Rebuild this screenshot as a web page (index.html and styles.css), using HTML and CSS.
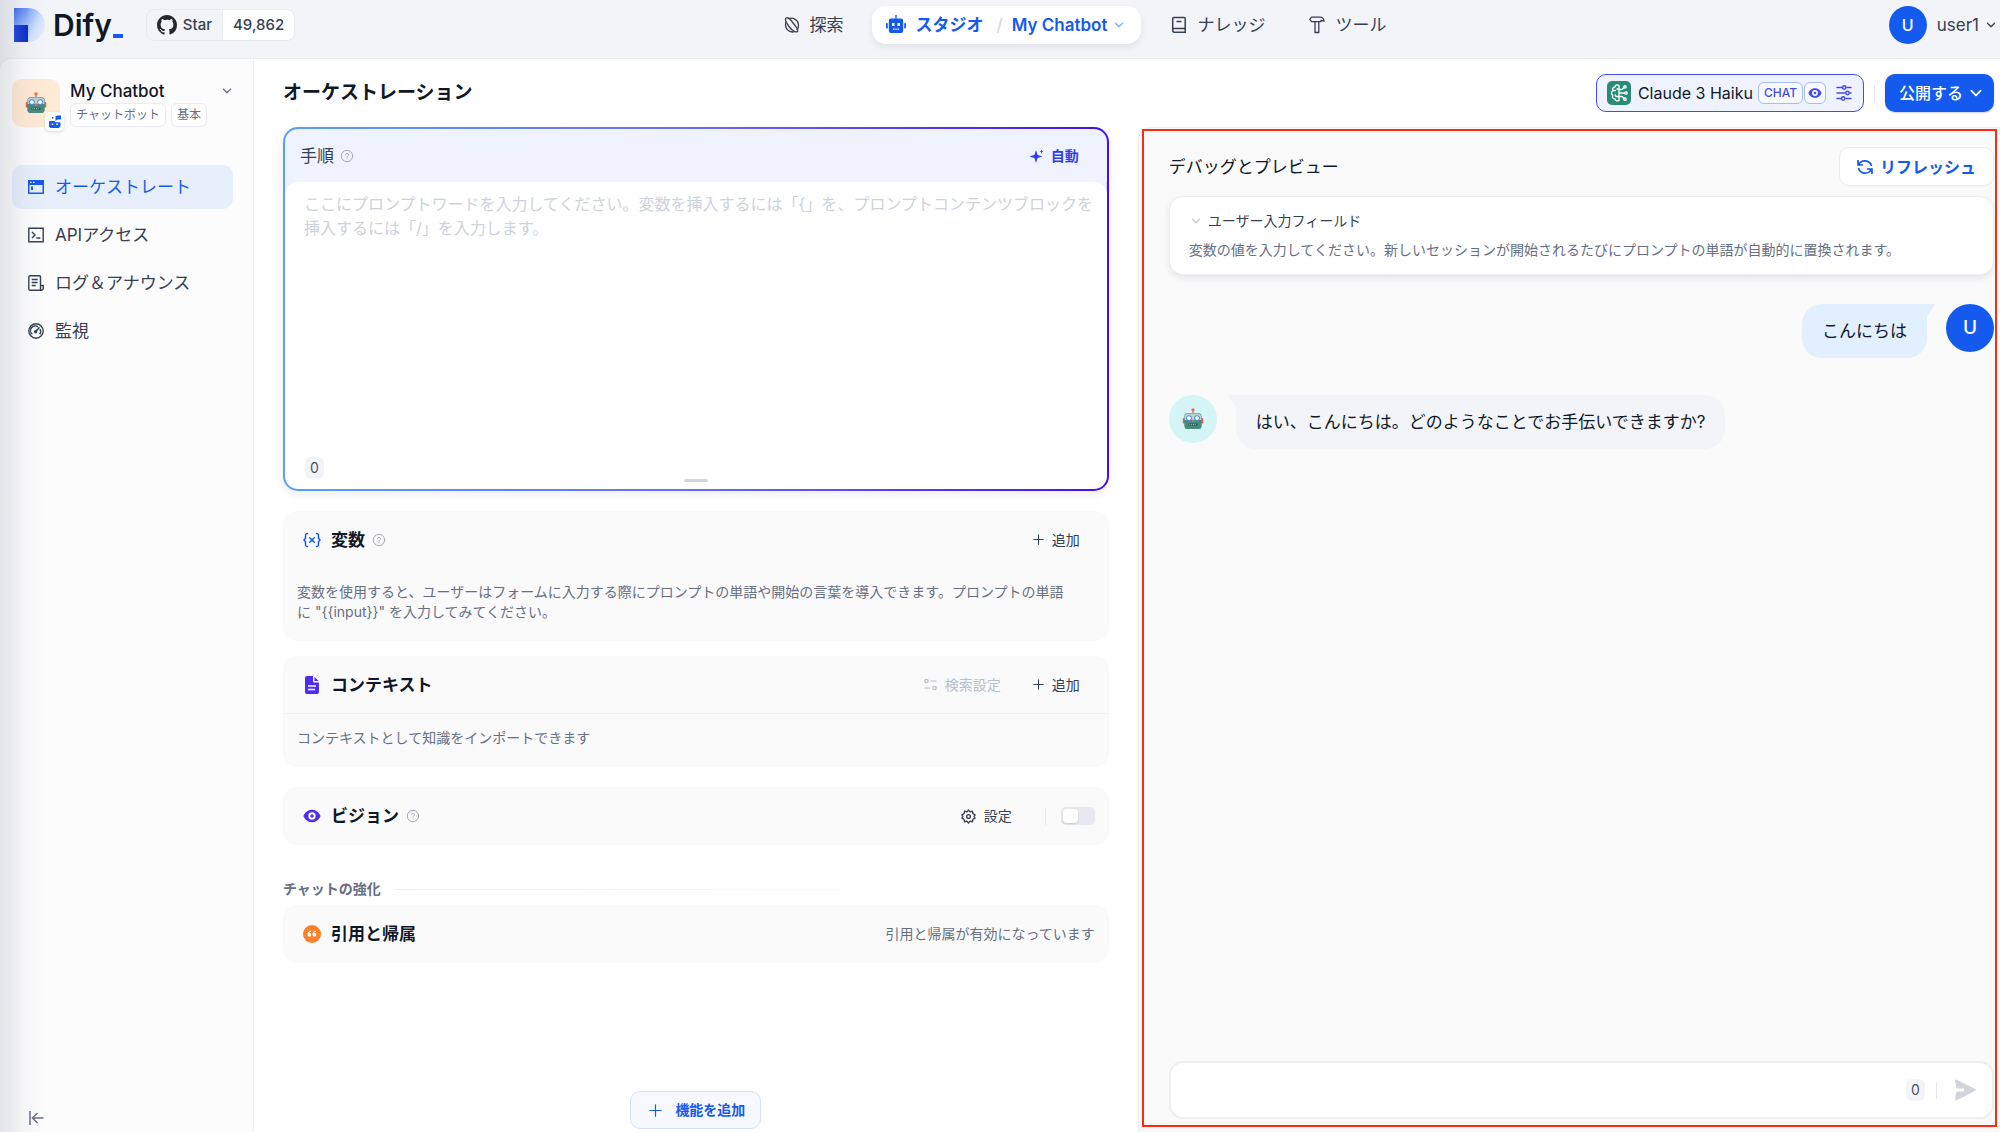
FILE: index.html
```html
<!DOCTYPE html>
<html lang="ja">
<head>
<meta charset="utf-8">
<meta name="viewport" content="width=device-width, initial-scale=1">
<title>My Chatbot - Dify</title>
<link rel="stylesheet" href="styles.css">
</head>
<body>
<svg class="defs" aria-hidden="true">
  <symbol id="chevron" viewBox="0 0 12 12"><path d="M2.5 4.2 6 7.8l3.5-3.6" fill="none" stroke="currentColor" stroke-width="1.3" stroke-linecap="round" stroke-linejoin="round"/></symbol>
  <symbol id="help" viewBox="0 0 14 14"><g fill="none" stroke="currentColor" stroke-linecap="round"><circle cx="7" cy="7" r="5.7"/><path d="M5.5 5.7a1.5 1.5 0 1 1 2.2 1.4c-.5.3-.7.5-.7 1"/><path d="M7 9.9v.1"/></g></symbol>
  <symbol id="plus" viewBox="0 0 12 12"><path d="M6 .8v10.400M.8 6h10.400" fill="none" stroke="currentColor" stroke-width="1.1" stroke-linecap="round"/></symbol>
  <symbol id="eye" viewBox="0 0 18 18"><path fill-rule="evenodd" d="M9 2.800C4.500 2.800 1.600 6 .5 9c1.100 3 4 6.200 8.500 6.200S16.400 12 17.500 9C16.400 6 13.500 2.800 9 2.800ZM9 5.300a3.700 3.700 0 1 1 0 7.400 3.700 3.700 0 0 1 0-7.400Zm0 2a1.700 1.700 0 1 0 0 3.400 1.700 1.700 0 0 0 0-3.400Z" fill="currentColor"/></symbol>
  <symbol id="robot" viewBox="0 0 24 24">
    <path d="M12 3v4" stroke="#8b98a0" stroke-width="1.500"/><circle cx="12" cy="2" r="1.800" fill="#f06a4c"/>
    <rect x=".8" y="11" width="3" height="6" rx="1" fill="#e0654a"/><rect x="20.200" y="11" width="3" height="6" rx="1" fill="#e0654a"/>
    <path d="M2.500 10q0-4.500 4.500-4.500h10q4.500 0 4.500 4.500v9q0 4-4 4H6.500q-4 0-4-4Z" fill="#468a80"/>
    <path d="M3 10q0-4 4-4h10q4 0 4 4v3H3Z" fill="#c3d0d0"/>
    <circle cx="7.600" cy="11" r="3.100" fill="#4b8fe2"/><circle cx="16.400" cy="11" r="3.100" fill="#4b8fe2"/>
    <circle cx="7.600" cy="11" r="2.100" fill="#fff"/><circle cx="16.400" cy="11" r="2.100" fill="#fff"/>
    <path d="m12 12 1.800 3h-3.600Z" fill="#f06a4c"/><rect x="7" y="17" width="10" height="2.400" rx=".6" fill="#245e58"/>
    <path d="M8 18.200h8" stroke="#c9dcd8" stroke-dasharray="1 1"/>
  </symbol>
</svg>

<header class="topbar">
  <div class="brand">
    <a class="logo" href="#" aria-label="Dify">
      <svg width="31" height="34" viewBox="0 0 31 34" aria-hidden="true">
        <defs>
          <linearGradient id="lg1" x1="0" y1="0" x2="1" y2="1"><stop offset="0" stop-color="#3f70ee"/><stop offset="1" stop-color="#a9c5fa"/></linearGradient>
          <linearGradient id="lg2" x1="0" y1="0" x2="1" y2="1"><stop offset="0" stop-color="#7fa6f6"/><stop offset=".5" stop-color="#cfe0fd"/><stop offset="1" stop-color="#eef4ff"/></linearGradient>
          <linearGradient id="lg3" x1="0" y1="0" x2="1" y2="0"><stop offset="0" stop-color="#2448dc"/><stop offset="1" stop-color="#0d2cc8"/></linearGradient>
        </defs>
        <path d="M14 0a17 17 0 0 1 0 34Z" fill="url(#lg2)"/><path d="M0 0h14v17H0Z" fill="url(#lg1)"/><path d="M0 17h14v17H0Z" fill="url(#lg3)"/>
      </svg>
      <span class="logo-name">Dify</span><span class="logo-bar"></span>
    </a>
    <a class="stars" href="#">
      <span class="stars-label">
        <svg width="20" height="20" viewBox="0 0 16 16" aria-hidden="true"><path fill="#24292f" d="M8 0C3.580 0 0 3.580 0 8c0 3.540 2.290 6.530 5.470 7.590.4.070.55-.17.55-.38 0-.19-.01-.82-.01-1.490-2.010.37-2.530-.49-2.690-.94-.09-.23-.48-.94-.82-1.130-.28-.15-.68-.52-.01-.53.63-.01 1.080.58 1.230.82.72 1.210 1.870.87 2.330.66.070-.52.28-.87.51-1.070-1.780-.2-3.640-.89-3.640-3.950 0-.87.31-1.590.82-2.150-.08-.2-.36-1.020.08-2.120 0 0 .67-.21 2.200.82A7.600 7.600 0 0 1 8 3.860c.68 0 1.360.09 2 .27 1.530-1.040 2.200-.82 2.200-.82.44 1.100.16 1.920.08 2.120.51.56.82 1.270.82 2.150 0 3.070-1.870 3.750-3.650 3.950.29.25.54.73.54 1.480 0 1.070-.01 1.930-.01 2.200 0 .21.15.46.55.38A8.010 8.010 0 0 0 16 8c0-4.420-3.580-8-8-8Z"/></svg>
        Star</span>
      <span class="stars-count">49,862</span>
    </a>
  </div>
  <nav class="mainnav">
    <a href="#"><svg width="16" height="18" viewBox="0 0 16 18" fill="none" stroke="currentColor" stroke-width="1.300" aria-hidden="true"><path d="M4.500 2.800C9 .8 14.500 4 14.500 9.500c0 2-.6 3.600-1.700 4.800M10.500 15.700C6 17 1.500 13.500 1.500 8.800c0-1.300.2-2.300.7-3.300"/><path d="M13.500 15.500c-1.800 1.500-5.500-1-8.500-5S.5 3 2.200 2s4 1 6.500 4.500 6.500 7.300 4.800 9Z"/></svg>探索</a>
    <div class="pill">
      <a href="#"><svg width="20" height="20" viewBox="0 0 20 20" fill="currentColor" aria-hidden="true"><path fill-rule="evenodd" d="M9.300 0h1.400v3.500H15q2.200 0 2.200 2.200v10.100q0 2.200-2.200 2.200H5q-2.200 0-2.200-2.200V5.700q0-2.200 2.200-2.200h4.300ZM6 8v3h2.500V8Zm5.500 0v3H14V8ZM7 13.500v1.300h1.500v-1.300Zm2.300 0v1.300h1.500v-1.300Zm2.300 0v1.300h1.500v-1.300Z"/><rect x="0" y="8" width="1.800" height="5.500" rx=".8"/><rect x="18.200" y="8" width="1.800" height="5.500" rx=".8"/></svg>スタジオ</a>
      <span class="slash">/</span>
      <button type="button">My Chatbot<svg class="pale" width="12" height="12" aria-hidden="true"><use href="#chevron"/></svg></button>
    </div>
    <a href="#"><svg width="16" height="18" viewBox="0 0 16 18" fill="none" stroke="currentColor" stroke-width="1.500" aria-hidden="true"><path d="M14.200 12.500H3.200a1.500 1.500 0 0 0-1.500 1.700V2.500q0-1 1-1h10.500q1 0 1 1v13.700H3.200a1.700 1.700 0 0 1-1.500-2M5.500 5.500h5"/></svg>ナレッジ</a>
    <a href="#"><svg width="16" height="18" viewBox="0 0 16 18" fill="none" stroke="currentColor" stroke-width="1.300" stroke-linejoin="round" aria-hidden="true"><path d="M2.500 1.200h8.500q3.500 0 4 4l-3-.9v1.300H9.800V16.500H6V5.600H2.500L.8 3.400Z M6 5.600h3.800"/></svg>ツール</a>
  </nav>
  <button class="user" type="button"><span class="avatar avatar-sm">U</span>user1<svg width="12" height="12" aria-hidden="true"><use href="#chevron"/></svg></button>
</header>

<div class="shell">
  <aside class="sidebar">
    <div class="app">
      <div class="app-icon"><svg width="22" height="22" aria-hidden="true"><use href="#robot"/></svg>
        <span class="app-badge"><svg width="14" height="14" viewBox="0 0 14 14" fill="currentColor" aria-hidden="true"><path d="M7.500 1.500 9 .5h4v4H9.500L7.500 6ZM4 2h1.500v1.500H4ZM1.500 6h5l1 1.200H12l.5.5V11l-1.500 2H2.500L1 11.500V7Z"/><path d="M4.500 8.500V10M9 8.500V10" stroke="#fff" stroke-width="1.500"/></svg></span>
      </div>
      <div class="app-info">
        <button class="app-name" type="button">My Chatbot<svg width="12" height="12" aria-hidden="true"><use href="#chevron"/></svg></button>
        <div class="tags"><span>チャットボット</span><span>基本</span></div>
      </div>
    </div>
    <nav class="sidenav">
      <a class="active" href="#"><svg width="16" height="16" viewBox="0 0 16 16" aria-hidden="true"><path fill="currentColor" fill-rule="evenodd" d="M0 1h16v14H0ZM1.500 6v7.500h13V6ZM2 2.700v1.200h1.500V2.700Zm3 0v1.200h1.500V2.700ZM3 7.500h2V11H3Z"/></svg>オーケストレート</a>
      <a href="#"><svg width="16" height="16" viewBox="0 0 16 16" fill="none" stroke="currentColor" stroke-width="1.400" aria-hidden="true"><path d="M.8 1.300h14.400v13.400H.8ZM4 5l3 3-3 3M8.300 11h4"/></svg>APIアクセス</a>
      <a href="#"><svg width="16" height="16" viewBox="0 0 16 16" fill="none" stroke="currentColor" stroke-width="1.400" aria-hidden="true"><path d="M12.500 10.500V2q0-1.200-1.200-1.200H2Q.8.800.8 2v12q0 1.200 1.200 1.200h11.500q1.700 0 1.700-1.700v-3h-2.700v3q0 1.500 1.200 1.500M3.700 4.500h6M3.700 7.500h6M3.700 10.500h4"/></svg>ログ＆アナウンス</a>
      <a href="#"><svg width="16" height="16" viewBox="0 0 16 16" fill="none" stroke="currentColor" stroke-width="1.400" aria-hidden="true"><circle cx="8" cy="8" r="7.200"/><path d="M4.300 11.200A4.600 4.600 0 0 1 10 3.900M12 6a4.600 4.600 0 0 1-.4 5.200M7.500 8.700l4-4.400"/><circle cx="7.700" cy="8.700" r="1"/></svg>監視</a>
    </nav>
    <button class="collapse" type="button" aria-label="サイドバーを閉じる"><svg width="15" height="14" viewBox="0 0 15 14" fill="none" stroke="currentColor" stroke-width="1.500" aria-hidden="true"><path d="M1 0v14M14.500 7H4M8.500 2 3.500 7l5 5"/></svg></button>
  </aside>

  <main class="main">
    <div class="titlebar">
      <h1>オーケストレーション</h1>
      <div class="actions">
        <button class="model" type="button">
          <svg width="24" height="24" viewBox="0 0 24 24" aria-hidden="true"><rect width="24" height="24" rx="5" fill="#2a8c78"/><g fill="none" stroke="#fff" stroke-width="1.300" stroke-linejoin="round"><path d="M12 4.500c-2-1.200-4-.2-4 1.500C6 6 5 7.800 6 9.500c-2 1-2 3.500-.2 4.700C5 16 6 18 8 18c.3 2 2.600 2.500 4 1.200ZM12 8H9.500M12 15.500H9l-1-2M6 9.500h3M12 12h6M12 8.500h3l2-2M12 15.500h3l2 2"/><circle cx="18" cy="5.800" r="1.200"/><circle cx="19" cy="12" r="1.200"/><circle cx="18" cy="18.200" r="1.200"/></g></svg>
          <span class="model-name">Claude 3 Haiku</span>
          <span class="chips"><span class="chip">CHAT</span><span class="chip"><svg width="14" height="14" aria-hidden="true"><use href="#eye"/></svg></span></span>
          <svg width="16" height="16" viewBox="0 0 16 16" fill="none" stroke="currentColor" stroke-width="1.500" stroke-linecap="round" aria-hidden="true"><path d="M1 2.500h5M11 2.500h4M1 8h8M14 8h1M1 13.500h4M10 13.500h5"/><circle cx="8.200" cy="2.500" r="1.700"/><circle cx="11.500" cy="8" r="1.700"/><circle cx="7.200" cy="13.500" r="1.700"/></svg>
        </button>
        <span class="rule"></span>
        <button class="publish" type="button">公開する<svg width="16" height="16" aria-hidden="true"><use href="#chevron"/></svg></button>
      </div>
    </div>

    <div class="columns">
      <div class="config">
        <section class="prompt">
          <div class="prompt-head">
            <label for="prompt">手順</label><svg class="help" width="14" height="14" aria-hidden="true"><use href="#help"/></svg>
            <button class="auto" type="button"><svg width="14" height="14" viewBox="0 0 14 14" fill="currentColor" aria-hidden="true"><path d="M6 1 7.600 5.900l4.900 1.600-4.900 1.600L6 14 4.400 9.100-.5 7.500l4.900-1.600Z"/><path d="m11.500.5.6 1.400 1.400.6-1.400.6-.6 1.400-.6-1.400-1.400-.6 1.400-.6Z"/></svg>自動</button>
          </div>
          <div class="prompt-body">
            <textarea id="prompt" placeholder="ここにプロンプトワードを入力してください。変数を挿入するには「{」を、プロンプトコンテンツブロックを挿入するには「/」を入力します。"></textarea>
            <div class="prompt-foot"><span class="count">0</span><span class="grip"></span></div>
          </div>
        </section>

        <section class="card gap-md">
          <div class="card-head">
            <svg class="blue" width="18" height="18" viewBox="0 0 18 18" fill="none" stroke="currentColor" stroke-width="1.500" stroke-linecap="round" aria-hidden="true"><path d="M4.500 2.500c-2 0-2 .8-2 2.500v2.200L1 9l1.500 1.800V13c0 1.700 0 2.500 2 2.500M13.500 2.500c2 0 2 .8 2 2.500v2.200L17 9l-1.500 1.800V13c0 1.700 0 2.500-2 2.500M6.700 6.700l4.600 4.600M11.300 6.700l-4.600 4.600"/></svg>
            <h2>変数</h2><svg class="help" width="14" height="14" aria-hidden="true"><use href="#help"/></svg>
            <div class="tools"><button class="tool" type="button"><svg width="11" height="11" aria-hidden="true"><use href="#plus"/></svg>追加</button></div>
          </div>
          <p class="card-text">変数を使用すると、ユーザーはフォームに入力する際にプロンプトの単語や開始の言葉を導入できます。プロンプトの単語<br>に "{{input}}" を入力してみてください。</p>
        </section>

        <section class="card gap-sm">
          <div class="card-head">
            <svg class="violet" width="18" height="18" viewBox="0 0 18 18" aria-hidden="true"><path fill="currentColor" d="M4 0h6v5q0 1.500 1.500 1.500H16V16q0 2-2 2H4q-2 0-2-2V2q0-2 2-2Zm7.500.8L15.500 5h-4Z"/><path d="M5 10h8M5 13.500h7" stroke="#fafafb" stroke-width="1.300"/></svg>
            <h2>コンテキスト</h2>
            <div class="tools">
              <button class="tool" type="button" disabled><svg width="13" height="13" viewBox="0 0 13 13" fill="none" stroke="currentColor" stroke-width="1.200" stroke-linecap="round" aria-hidden="true"><circle cx="2.500" cy="3" r="1.700"/><path d="M7 3h5M1 10h5"/><circle cx="10.500" cy="10" r="1.700"/></svg>検索設定</button>
              <button class="tool" type="button"><svg width="11" height="11" aria-hidden="true"><use href="#plus"/></svg>追加</button>
            </div>
          </div>
          <p class="card-text ruled">コンテキストとして知識をインポートできます</p>
        </section>

        <section class="card gap-md">
          <div class="card-head tight">
            <svg class="violet" width="18" height="18" aria-hidden="true"><use href="#eye"/></svg>
            <h2>ビジョン</h2><svg class="help" width="14" height="14" aria-hidden="true"><use href="#help"/></svg>
            <div class="tools">
              <button class="tool" type="button"><svg width="15" height="15" viewBox="0 0 24 24" fill="none" stroke="currentColor" stroke-width="2.200" stroke-linejoin="round" aria-hidden="true"><path d="m12 1.500 2.400 3 3.800-.9.900 3.800 3.400 1.900-1.600 2.700 1.600 2.700-3.400 1.900-.9 3.800-3.800-.9-2.400 3-2.400-3-3.800.9-.9-3.800-3.400-1.900L3.100 12 1.500 9.300l3.400-1.900.9-3.800 3.800.9Z"/><circle cx="12" cy="12" r="3"/></svg>設定</button>
              <span class="rule"></span>
              <input class="switch" type="checkbox" aria-label="ビジョン">
            </div>
          </div>
        </section>

        <h3 class="divider">チャットの強化</h3>
        <section class="card">
          <div class="card-head tight">
            <svg width="18" height="18" viewBox="0 0 18 18" aria-hidden="true"><circle cx="9" cy="9" r="9" fill="#ff8129"/><path fill="#fff" d="M8 5.500C5.500 6 4.500 7.500 4.500 9.800a1.900 1.900 0 1 0 1.900-1.900Q6.600 7 8 6.700Zm5 0c-2.500.5-3.500 2-3.500 4.300a1.900 1.900 0 1 0 1.900-1.900q.2-.9 1.600-1.200Z"/></svg>
            <h2>引用と帰属</h2>
            <div class="tools"><span class="note">引用と帰属が有効になっています</span></div>
          </div>
        </section>

        <button class="add-feature" type="button"><svg width="13" height="13" aria-hidden="true"><use href="#plus"/></svg>機能を追加</button>
      </div>

      <section class="preview">
        <div class="preview-head">
          <h2>デバッグとプレビュー</h2>
          <button class="refresh" type="button"><svg width="16" height="16" viewBox="0 0 16 16" fill="none" stroke="currentColor" stroke-width="1.700" aria-hidden="true"><path d="M1 1v5h5M15 15v-5h-5M1.500 6A7 7 0 0 1 14.600 7M14.500 10A7 7 0 0 1 1.400 9"/></svg>リフレッシュ</button>
        </div>
        <div class="fields">
          <button type="button"><svg class="pale-gray" width="12" height="12" aria-hidden="true"><use href="#chevron"/></svg>ユーザー入力フィールド</button>
          <p>変数の値を入力してください。新しいセッションが開始されるたびにプロンプトの単語が自動的に置換されます。</p>
        </div>
        <div class="chat">
          <div class="msg mine"><p class="bubble">こんにちは</p><span class="avatar">U</span></div>
          <div class="msg"><span class="avatar bot"><svg width="22" height="22" aria-hidden="true"><use href="#robot"/></svg></span><p class="bubble">はい、こんにちは。どのようなことでお手伝いできますか?</p></div>
        </div>
        <form class="composer">
          <input type="text" aria-label="メッセージ">
          <span class="count">0</span><span class="rule"></span>
          <button type="button" aria-label="送信"><svg width="22" height="22" viewBox="0 0 22 22" aria-hidden="true"><path fill="#d0d5dd" d="M1 1.500Q.8 0 2.200.6L21 9.900q1.500 1.100 0 2.200L2.200 21.400Q.8 22 1 20.500L2.500 12.500H10v-3H2.500Z"/></svg></button>
        </form>
        <div class="outline"></div>
      </section>
    </div>
  </main>
</div>
</body>
</html>
```
FILE: styles.css
```css
* { box-sizing: border-box; }
body {
  margin: 0;
  height: 100vh;
  display: flex;
  flex-direction: column;
  overflow: hidden;
  position: relative;
  background: #f2f4f7;
  color: #101828;
  font-family: Inter, "Noto Sans CJK JP", sans-serif;
  font-size: 17px;
  line-height: 24px;
}
/* soft shade along the window's left edge */
body::after {
  content: "";
  position: absolute;
  inset: 0 auto 0 0;
  width: 46px;
  background: linear-gradient(90deg, rgba(60, 70, 85, .13), rgba(60, 70, 85, .03) 55%, transparent);
  pointer-events: none;
}
h1, h2, h3, p { margin: 0; }
a { color: inherit; text-decoration: none; }
button { font: inherit; color: inherit; background: none; border: 0; padding: 0; display: flex; align-items: center; cursor: pointer; }
svg { flex: none; }
.defs { position: absolute; width: 0; height: 0; }
.blue { color: #155aef; }
.violet { color: #4f2df0; }
.pale { color: #84abff; }
.pale-gray { color: #c3c9d4; }
.help { color: #a4abb8; }
.rule { width: 1px; height: 17px; background: #e4e7ec; }
.avatar { flex: none; width: 48px; height: 48px; border-radius: 50%; background: #155aef; color: #fff; display: flex; align-items: center; justify-content: center; font-size: 19px; font-weight: 500; }
.avatar-sm { width: 38px; height: 38px; font-size: 16px; }
.avatar.bot { background: #d5f5f6; }

/* top bar */
.topbar { flex: none; height: 59px; padding: 0 3px 9px 14px; display: flex; align-items: center; justify-content: space-between; color: #354052; }
.brand { display: flex; align-items: center; gap: 23px; }
.logo { display: flex; align-items: center; }
.logo-name { margin-left: 8px; font-size: 30px; line-height: 34px; font-weight: 600; color: #101828; }
.logo-bar { width: 10px; height: 4px; margin: 22px 0 0 1px; background: #155aef; }
.stars { display: flex; height: 32px; border: 1px solid #e9ebf0; border-radius: 8px; overflow: hidden; font-size: 15px; font-weight: 500; }
.stars span { display: flex; align-items: center; gap: 6px; padding: 0 10px; }
.stars-count { background: #fff; border-left: 1px solid #e9ebf0; }
.mainnav { display: flex; align-items: center; margin-right: 14px; }
.mainnav a { display: flex; align-items: center; gap: 10px; }
.mainnav > a { padding: 0 28px; }
.mainnav > a + a, .pill + a { padding: 0 28px 0 16px; }
.pill { display: flex; align-items: center; height: 38px; padding: 0 16px 0 14px; border-radius: 14px; background: #fff; color: #155aef; font-weight: 600; box-shadow: 0 3px 6px rgba(16, 24, 40, .08); }
.pill button { gap: 6px; }
.pill + a { padding-left: 30px; }
.slash { margin: 0 9px 0 13px; color: #d0d5dd; font-weight: 400; }
.user { gap: 10px; }
.user svg { margin-left: -4px; }

/* sidebar */
.shell { flex: 1; min-height: 0; display: flex; background: #fff; border-radius: 12px 0 0 0; overflow: hidden; box-shadow: 0 0 2px rgba(16, 24, 40, .12); }
.sidebar { flex: none; width: 254px; padding: 20px 20px 7px 12px; display: flex; flex-direction: column; background: #fcfcfd; border-right: 1px solid #eff1f4; color: #354052; }
.app { display: flex; gap: 10px; }
.app-icon { position: relative; flex: none; width: 48px; height: 48px; border-radius: 10px; background: #ffead5; display: flex; align-items: center; justify-content: center; }
.app-badge { position: absolute; right: -4px; bottom: -4px; width: 19px; height: 19px; border-radius: 5px; background: #fff; color: #155aef; display: flex; align-items: center; justify-content: center; box-shadow: 0 1px 3px rgba(16, 24, 40, .15); }
.app-info { flex: 1; }
.app-name { width: 100%; justify-content: space-between; font-weight: 500; color: #101828; }
.app-name svg { color: #676f83; }
.tags { display: flex; gap: 5px; }
.tags span { height: 24px; padding: 0 5px; border: 1px solid #e9ebf0; border-radius: 6px; background: #fff; color: #676f83; font-size: 12px; line-height: 22px; }
.sidenav { display: flex; flex-direction: column; gap: 4px; margin-top: 38px; }
.sidenav a { display: flex; align-items: center; gap: 11px; height: 44px; padding: 0 16px; border-radius: 10px; }
.sidenav .active { background: #e8effc; color: #155aef; }
.collapse { margin-top: auto; padding-left: 17px; color: #676f83; }

/* title bar */
.main { flex: 1; min-width: 0; display: flex; flex-direction: column; }
.titlebar { flex: none; height: 68px; padding: 0 6px 0 29px; display: flex; align-items: center; justify-content: space-between; }
.titlebar h1 { font-size: 19px; font-weight: 700; }
.actions { display: flex; align-items: center; gap: 10px; }
.model { height: 38px; padding: 0 11px 0 10px; gap: 7px; border: 1px solid #444ce7; border-radius: 10px; background: #eef3ff; color: #444ce7; }
.model-name { font-size: 16px; color: #101828; }
.chips { display: flex; gap: 1px; margin: 0 3px 0 -2px; }
.chip { display: flex; align-items: center; height: 22px; padding: 0 5px; border: 1px solid #a4bcfd; border-radius: 6px; background: #f8faff; font-size: 12px; font-weight: 500; }
.chip:last-child { padding: 0 3px; }
.publish { height: 38px; padding: 0 10px 0 14px; gap: 5px; border-radius: 10px; background: #155aef; color: #fff; font-size: 16px; font-weight: 500; box-shadow: 0 1px 2px rgba(16, 24, 40, .2); }

/* configuration column */
.columns { flex: 1; min-height: 0; display: grid; grid-template-columns: 41fr 40fr; }
.config { min-width: 0; padding: 0 29px 3px; display: flex; flex-direction: column; }
.prompt { padding: 2px; border-radius: 15px; background: linear-gradient(90deg, #5b9ff5, #6a6cf0 50%, #4410ea); box-shadow: 0 3px 10px rgba(16, 24, 40, .08); }
.prompt-head { height: 53px; padding: 0 28px 0 15px; display: flex; align-items: center; gap: 6px; border-radius: 13px 13px 0 0; background: #eff3ff; color: #354052; }
.auto { margin-left: auto; gap: 7px; color: #2f3fe6; font-size: 14px; font-weight: 700; }
.prompt-body { background: linear-gradient(#eff3ff, #eff3ff) top / 100% 20px no-repeat; border-radius: 0 0 13px 13px; }
.prompt-body textarea { display: block; width: 100%; height: 273px; padding: 10px 5px 0 19px; border: 0; border-radius: 13px 13px 0 0; outline: 0; resize: none; background: #fff; color: #354052; font: 16px/24px Inter, "Noto Sans CJK JP", sans-serif; }
.prompt-body textarea::placeholder { color: #cdd2db; }
.prompt-foot { position: relative; height: 34px; padding-left: 20px; border-radius: 0 0 13px 13px; background: #fff; }
.count { display: inline-flex; align-items: center; justify-content: center; width: 19px; height: 22px; border-radius: 6px; background: #f2f4f7; color: #495464; font-size: 14px; }
.grip { position: absolute; left: calc(50% - 12px); bottom: 7px; width: 24px; height: 3px; border-radius: 2px; background: #d0d5dd; }
.card { border-radius: 14px; background: #fafafb; }
.gap-md { margin-top: 20px; }
.gap-sm { margin-top: 15px; }
.card-head { height: 57px; padding: 0 29px 0 20px; display: flex; align-items: center; }
.card-head.tight { height: 58px; padding-right: 14px; }
.card-head h2 { margin-left: 10px; font-size: 17px; font-weight: 600; }
.card-head .help { margin-left: 7px; }
.tools { margin-left: auto; display: flex; align-items: center; gap: 32px; }
.tight .tools { gap: 15px; }
.tight .tool { margin-right: 18px; }
.tool { gap: 8px; font-size: 14px; color: #354052; }
.tool:disabled { color: #b8becb; }
.note { font-size: 14px; color: #676f83; }
.switch { appearance: none; width: 34px; height: 18px; margin: 0; padding: 2px; border-radius: 5px; background: #e7e9ee; display: flex; }
.switch::before { content: ""; width: 15px; height: 14px; border-radius: 4px; background: #fff; box-shadow: 0 1px 2px rgba(16, 24, 40, .15); }
.card-text { padding: 14px 14px 19px; font-size: 14px; line-height: 20px; color: #676f83; }
.card-text.ruled { border-top: 1px solid #f0f2f5; }
.divider { display: flex; align-items: center; gap: 15px; margin: 34px 0 6px; font-size: 14px; line-height: 20px; font-weight: 600; color: #676f83; }
.divider::after { content: ""; flex: 1; height: 1px; background: linear-gradient(90deg, #eceef2, transparent 80%); }
.add-feature { margin: auto auto 0; height: 38px; padding: 0 15px 0 18px; gap: 13px; border: 1px solid #d1e0ff; border-radius: 10px; background: #f7f9ff; color: #155aef; font-size: 14px; font-weight: 600; }

/* preview column */
.preview { position: relative; min-width: 0; padding: 19px 6px 13px 30px; display: flex; flex-direction: column; border: solid #eceef2; border-width: 1px 0 0 1px; border-radius: 14px 0 0 0; background: #fafafb; }
.preview-head { display: flex; align-items: center; justify-content: space-between; }
.preview-head h2 { font-size: 17px; font-weight: 400; }
.refresh { height: 39px; padding: 0 17px; gap: 7px; border: 1px solid #e9ebf0; border-radius: 10px; background: #fff; color: #155aef; font-size: 16px; font-weight: 600; }
.fields { margin-top: 10px; padding: 14px 19px 14px; border: 1px solid #eceef2; border-radius: 14px; background: #fff; box-shadow: 0 3px 6px rgba(16, 24, 40, .09); font-size: 14px; line-height: 20px; }
.fields button { gap: 6px; padding-left: 1px; line-height: 20px; color: #354052; }
.fields p { margin-top: 9px; color: #676f83; }
.chat { flex: 1; padding-top: 29px; display: flex; flex-direction: column; gap: 37px; }
.msg { display: flex; gap: 19px; }
.msg.mine { justify-content: flex-end; }
.bubble { position: relative; padding: 15px 20px; border-radius: 0 20px 20px 20px; background: #f2f4f7; }
.bubble::before { content: ""; position: absolute; top: 0; left: -8px; width: 9px; height: 14px; background: #f2f4f7; clip-path: polygon(0 0, 100% 0, 100% 100%); }
.mine .bubble { border-radius: 20px 0 20px 20px; background: #e1effe; }
.mine .bubble::before { left: auto; right: -8px; background: #e1effe; clip-path: polygon(0 0, 100% 0, 0 100%); }
.composer { display: flex; align-items: center; height: 58px; padding-right: 16px; border: 2px solid #eceef2; border-radius: 14px; background: #fff; }
.composer input { flex: 1; min-width: 0; height: 40px; padding: 0 16px; border: 0; outline: 0; background: none; font: inherit; }
.composer .rule { margin: 0 17px 0 11px; }
/* red highlight frame round the preview */
.outline { position: absolute; inset: 1px 3px 5px 3px; border: 2px solid #ff2a12; pointer-events: none; }
```
